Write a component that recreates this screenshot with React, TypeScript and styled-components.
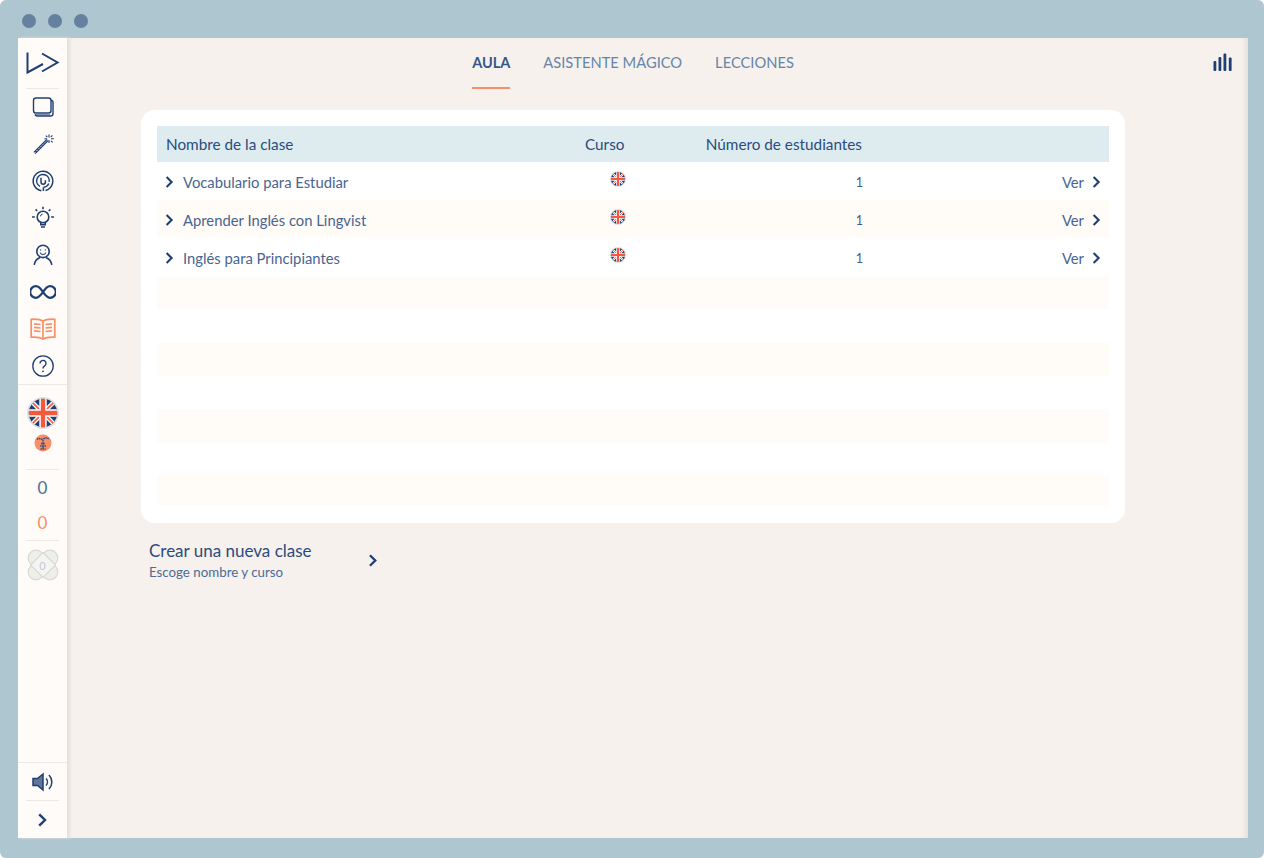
import React from "react"
import styled, { createGlobalStyle } from "styled-components"

const navy = "#1f3f73"
const ink = "#486590"
const orange = "#f98f66"

const GlobalStyle = createGlobalStyle`
  html, body {
    margin: 0;
    background: #ffffff;
    overflow: hidden;
  }
  * {
    box-sizing: border-box;
  }
`

const classes = [
  { name: "Vocabulario para Estudiar", students: 1 },
  { name: "Aprender Inglés con Lingvist", students: 1 },
  { name: "Inglés para Principiantes", students: 1 },
]

const Chevron = ({ size = 12 }: { size?: number }) => (
  <svg width={size} height={size} viewBox="0 0 12 12" fill="none">
    <path d="M3.6 1.1 8.6 6 3.6 10.9" stroke={navy} strokeWidth="2.1" />
  </svg>
)

const UkFlag = ({ size }: { size: number }) => (
  <svg width={size} height={size} viewBox="0 0 32 32">
    <defs>
      <clipPath id={`flag-${size}`}>
        <circle cx="16" cy="16" r="14.2" />
      </clipPath>
    </defs>
    <circle cx="16" cy="16" r="16" fill="#dfe0e1" />
    <g clipPath={`url(#flag-${size})`}>
      <rect width="32" height="32" fill="#1f3f73" />
      <path d="M0 0 32 32M32 0 0 32" stroke="#fff" strokeWidth="4.4" />
      <path d="M0 0 32 32M32 0 0 32" stroke="#f5593d" strokeWidth="1.6" />
      <path d="M16 0V32M0 16H32" stroke="#fff" strokeWidth="7.4" />
      <path d="M16 0V32M0 16H32" stroke="#f5593d" strokeWidth="4.4" />
    </g>
  </svg>
)

const Logo = () => (
  <svg width="34" height="24" viewBox="0 0 34 24" fill="none" stroke={navy} strokeWidth="2">
    <path d="M1.500 1.500V21.500L17 13" />
    <path d="M16 2.500 31.500 11.500 16 20.500" />
  </svg>
)

const Cards = () => (
  <svg width="24" height="24" viewBox="0 0 24 24" fill="none" stroke={navy}>
    <rect x="2.500" y="3" width="17.500" height="15" rx="2.500" strokeWidth="1.400" />
    <path d="M20 5.500h.4a1.600 1.600 0 0 1 1.600 1.600v11.300a2.600 2.600 0 0 1-2.600 2.600H6.600A2.600 2.600 0 0 1 4 19.600" strokeWidth="1.400" />
    <path d="M3.400 18.600a2.500 2.500 0 0 0 2.400 1.200h13.400" strokeWidth="0.800" />
  </svg>
)

const Wand = () => (
  <svg width="24" height="24" viewBox="0 0 24 24" fill="none" stroke={navy}>
    <path d="M3.500 21 16.500 8" strokeWidth="3" />
    <path d="M3.500 21 16.500 8" stroke="#fefbf8" strokeWidth="1" strokeDasharray="1.500 1.200" />
    <path d="M18 2.500v3M18 8v3M13.500 6.800h2.600M20 6.800h2.800M14.800 3.600l1.600 1.600M20 8.800l1.600 1.600M21.400 3.400l-1.600 1.600" strokeWidth="1.100" />
  </svg>
)

const Maze = () => (
  <svg width="24" height="24" viewBox="0 0 24 24" fill="none" stroke={navy} strokeWidth="1.500">
    <path d="M10.400 21.700A9.800 9.800 0 1 1 14.500 21.500" />
    <path d="M9 17.400A6.300 6.300 0 1 1 18.200 12.800" />
    <path d="M17.800 14.500A6.300 6.300 0 0 1 12.500 18.300" />
    <path d="M10 8.800V13a2.200 2.200 0 0 0 4.400 0v-1.800" />
    <path d="M12.400 22v-3.700" />
  </svg>
)

const Bulb = () => (
  <svg width="24" height="24" viewBox="0 0 24 24" fill="none" stroke={navy} strokeWidth="1.600">
    <circle cx="12" cy="11" r="5.800" />
    <path d="M9.800 16.500v2.300h4.400v-2.300M10 21h4" />
    <path d="M12 .8v2.400M4.600 3.400l1.600 1.600M19.400 3.400l-1.600 1.600M1 11h2.800M20.200 11h2.800" />
    <path d="M9.400 10.400a2.800 2.800 0 0 1 2.200-2.400" strokeWidth="1" />
  </svg>
)

const Learner = () => (
  <svg width="24" height="24" viewBox="0 0 24 24" fill="none" stroke={navy} strokeWidth="1.600">
    <circle cx="12" cy="8.400" r="6.200" />
    <path d="M3.200 21.800c.6-3.400 3-6 5.800-7.200M20.800 21.800c-.6-3.400-3-6-5.800-7.200" />
    <path d="M9.200 9.600a3 3 0 0 0 5.600 0" strokeWidth="1.200" />
    <path d="M9.600 6.400v1.200M14.400 6.400v1.200" strokeWidth="1.300" />
  </svg>
)

const Infinity_ = () => (
  <svg width="26" height="24" viewBox="0 0 26 24" fill="none" stroke={navy} strokeWidth="2.200">
    <path d="M13 12c-2-3-3.800-5.800-7-5.800a5.800 5.800 0 0 0 0 11.600c3.200 0 5-2.800 7-5.800s3.800-5.800 7-5.800a5.800 5.800 0 0 1 0 11.600c-3.200 0-5-2.800-7-5.800Z" />
  </svg>
)

const Book = () => (
  <svg width="26" height="24" viewBox="0 0 26 24" fill="none" stroke={orange} strokeWidth="1.700">
    <path d="M13 4C10.500 2.500 5 2 1.200 2.300V20.200C5 19.900 10.500 20.400 13 22 15.500 20.400 21 19.900 24.800 20.200V2.300C21 2 15.500 2.500 13 4Z" />
    <path d="M13 4V22M15.500 7.500 22 6.800M15.500 11 22 10.300M15.500 14.500 22 13.800M4 6.800 10.500 7.500M4 10.300 10.500 11M4 13.800 10.500 14.500" />
  </svg>
)

const Help = () => (
  <svg width="24" height="24" viewBox="0 0 24 24" fill="none" stroke={navy} strokeWidth="1.300">
    <circle cx="12" cy="12" r="10.200" />
    <path d="M9 9.400a3 3 0 1 1 4.600 2.500c-1 .7-1.600 1.300-1.600 2.700" strokeWidth="1.400" />
    <circle cx="12" cy="17.300" r="0.900" fill={navy} stroke="none" />
  </svg>
)

const Speaker = () => (
  <svg width="24" height="24" viewBox="0 0 24 24" fill="none" stroke={navy}>
    <path d="M2 8.500H6.500L12 4V20L6.500 15.500H2Z" fill="#5f7697" strokeWidth="1.500" />
    <path d="M15 8.500a5 5 0 0 1 0 7M18 5a10 10 0 0 1 0 14" strokeWidth="1.500" />
  </svg>
)

const Bars = () => (
  <svg width="20" height="20" viewBox="0 0 20 20" fill={navy}>
    <rect x="0.500" y="8" width="2.800" height="10" rx="1" />
    <rect x="5.500" y="4" width="2.800" height="14" rx="1" />
    <rect x="10.500" y="0.500" width="2.800" height="17.500" rx="1" />
    <rect x="15.800" y="4.500" width="2.800" height="13.500" rx="1" />
  </svg>
)

const Badge = () => (
  <svg width="18" height="18" viewBox="0 0 18 18">
    <circle cx="9" cy="9" r="8.500" fill={orange} />
    <path d="M3 5.500C5 3 7 6 9 5s4-2 6 .5M9 6v9M6 12h6M6.500 15h5M7 9.500h4" fill="none" stroke="#2f5288" strokeWidth="1.500" strokeDasharray="1.600 .6" />
  </svg>
)

const Clover = () => (
  <svg width="32" height="32" viewBox="0 0 32 32" fill="none" stroke="#d9d9d6" strokeWidth="1.200">
    <circle cx="9" cy="9" r="7.800" fill="#eeeeeb" />
    <circle cx="23" cy="9" r="7.800" fill="#eeeeeb" />
    <circle cx="9" cy="23" r="7.800" fill="#eeeeeb" />
    <circle cx="23" cy="23" r="7.800" fill="#eeeeeb" />
    <path d="M16 3.500 28.500 16 16 28.500 3.500 16Z" fill="#f6f4f1" />
  </svg>
)

const navIcons = [
  <Cards key="cards" />,
  <Wand key="wand" />,
  <Maze key="maze" />,
  <Bulb key="bulb" />,
  <Learner key="learner" />,
  <Infinity_ key="infinity" />,
  <Book key="book" />,
  <Help key="help" />,
]

export default function App() {
  return (
    <Frame>
      <GlobalStyle />
      <TitleBar>
        <Dot />
        <Dot />
        <Dot />
      </TitleBar>
      <Window>
        <Sidebar>
          <LogoSlot>
            <Logo />
          </LogoSlot>
          <Divider />
          <NavList>
            {navIcons.map((icon) => (
              <NavSlot key={icon.key}>{icon}</NavSlot>
            ))}
          </NavList>
          <Divider $full />
          <FlagSlot>
            <UkFlag size={32} />
            <Badge />
          </FlagSlot>
          <Divider />
          <Count>0</Count>
          <Count $accent>0</Count>
          <Divider />
          <CloverSlot>
            <Clover />
            <CloverCount>0</CloverCount>
          </CloverSlot>
          <SidebarFoot>
            <Divider $full />
            <FootSlot>
              <Speaker />
            </FootSlot>
            <Divider />
            <FootSlot $nudge>
              <Chevron size={14} />
            </FootSlot>
          </SidebarFoot>
        </Sidebar>
        <Main>
          <Tabs>
            <Tab $active>AULA</Tab>
            <Tab>ASISTENTE MÁGICO</Tab>
            <Tab>LECCIONES</Tab>
          </Tabs>
          <StatsButton>
            <Bars />
          </StatsButton>
          <Card>
            <HeadRow>
              <span>Nombre de la clase</span>
              <span>Curso</span>
              <HeadRight>Número de estudiantes</HeadRight>
              <span />
            </HeadRow>
            <Rows>
              {classes.map((item) => (
                <Row key={item.name}>
                  <NameCell>
                    <Chevron />
                    {item.name}
                  </NameCell>
                  <FlagCell>
                    <UkFlag size={16} />
                  </FlagCell>
                  <CountCell>{item.students}</CountCell>
                  <ViewCell>
                    Ver
                    <Chevron />
                  </ViewCell>
                </Row>
              ))}
              {Array.from({ length: 7 }, (_, i) => (
                <BlankRow key={i} />
              ))}
            </Rows>
          </Card>
          <CreateClass>
            <CreateText>
              <CreateTitle>Crear una nueva clase</CreateTitle>
              <CreateSub>Escoge nombre y curso</CreateSub>
            </CreateText>
            <Chevron size={13} />
          </CreateClass>
        </Main>
      </Window>
    </Frame>
  )
}

const Frame = styled.div`
  width: 1264px;
  height: 858px;
  display: flex;
  flex-direction: column;
  padding: 0 16px 20px 18px;
  background: #aec6d0;
  border-radius: 6px;
  font-family: "Lato", "Noto Sans", sans-serif;
  color: ${ink};
`

const TitleBar = styled.div`
  height: 38px;
  flex: none;
  display: flex;
  align-items: center;
  gap: 12px;
  padding: 4px 0 0 4px;
`

const Dot = styled.span`
  width: 14px;
  height: 14px;
  border-radius: 50%;
  background: #66809f;
`

const Window = styled.div`
  flex: 1;
  display: flex;
  min-height: 0;
  background: #f6f1ed;
  box-shadow: inset -5px 0 4px -2px #e6e0db;
`

const Sidebar = styled.nav`
  width: 49px;
  flex: none;
  display: flex;
  flex-direction: column;
  align-items: center;
  background: #fefbf8;
  box-shadow: 1px 0 0 #e6e1dd, 3px 0 3px #e4dfda;
  position: relative;
`

const LogoSlot = styled.div`
  height: 50px;
  width: 100%;
  flex: none;
  display: flex;
  align-items: center;
  justify-content: center;
`

const Divider = styled.div<{ $full?: boolean }>`
  width: ${(p) => (p.$full ? "100%" : "33px")};
  height: 1px;
  flex: none;
  background: #ece8e4;
`

const NavList = styled.div`
  display: flex;
  flex-direction: column;
  flex: none;
  margin-top: -1px;
`

const NavSlot = styled.div`
  height: 37px;
  width: 49px;
  display: flex;
  align-items: center;
  justify-content: center;
`

const FlagSlot = styled.div`
  height: 84px;
  flex: none;
  display: flex;
  flex-direction: column;
  align-items: center;
  gap: 5px;
  padding-top: 12px;
`

const Count = styled.div<{ $accent?: boolean }>`
  height: 35px;
  flex: none;
  display: flex;
  align-items: center;
  font-size: 17px;
  color: ${(p) => (p.$accent ? orange : "#4f6e9a")};
`

const CloverSlot = styled.div`
  position: relative;
  margin-top: 8px;
  width: 32px;
  height: 32px;
  flex: none;
`

const CloverCount = styled.span`
  position: absolute;
  inset: 0;
  display: flex;
  align-items: center;
  justify-content: center;
  font-size: 11px;
  color: #bccbd8;
`

const SidebarFoot = styled.div`
  margin-top: auto;
  width: 100%;
  display: flex;
  flex-direction: column;
  align-items: center;
`

const FootSlot = styled.div<{ $nudge?: boolean }>`
  height: 37px;
  flex: none;
  display: flex;
  align-items: center;
  justify-content: center;
  padding-right: ${(p) => (p.$nudge ? "2px" : "0")};
`

const Main = styled.main`
  flex: 1;
  min-width: 0;
  position: relative;
  display: flex;
  flex-direction: column;
  align-items: center;
  padding-right: 49px;
`

const Tabs = styled.div`
  height: 51px;
  flex: none;
  display: flex;
  gap: 33px;
  margin-bottom: 21px;
`

const Tab = styled.div<{ $active?: boolean }>`
  display: flex;
  align-items: center;
  padding-bottom: 1px;
  height: 100%;
  font-size: ${(p) => (p.$active ? "14.5px" : "14.7px")};
  font-weight: ${(p) => (p.$active ? 700 : 400)};
  color: ${(p) => (p.$active ? "#37588a" : "#6685a8")};
  border-bottom: 2px solid ${(p) => (p.$active ? orange : "transparent")};
`

const StatsButton = styled.div`
  position: absolute;
  top: 15px;
  right: 15px;
`

const Card = styled.section`
  width: 984px;
  height: 413px;
  flex: none;
  padding: 16px;
  background: #ffffff;
  border-radius: 14px;
`

const rowGrid = `
  display: grid;
  grid-template-columns: 419px 120px 157px 1fr;
  align-items: center;
  padding: 0 7px 0 9px;
`

const HeadRow = styled.div`
  ${rowGrid}
  height: 36px;
  padding-bottom: 1px;
  background: #deecf0;
  color: #2b4b7e;
  font-size: 15.3px;
`

const HeadRight = styled.span`
  text-align: right;
`

const Rows = styled.div`
  & > :nth-child(even) {
    background: #fffbf7;
  }
`

const Row = styled.div`
  ${rowGrid}
  height: 38.2px;
  padding-top: 1px;
  font-size: 14.8px;
`

const BlankRow = styled.div`
  height: 33px;
  &:last-child {
    height: 30px;
  }
`

const NameCell = styled.div`
  display: flex;
  align-items: center;
  gap: 8px;
  margin-left: -3px;
`

const FlagCell = styled.div`
  display: flex;
  padding: 0 0 6px 25px;
`

const CountCell = styled.div`
  text-align: right;
  font-size: 12.5px;
  color: #3f5c88;
  margin-right: -1px;
  padding-top: 1px;
`

const ViewCell = styled.div`
  display: flex;
  align-items: center;
  justify-content: flex-end;
  gap: 6px;
`

const CreateClass = styled.div`
  width: 984px;
  flex: none;
  display: flex;
  align-items: center;
  gap: 52px;
  padding: 17px 0 0 8px;
`

const CreateText = styled.div`
  width: 165px;
  display: flex;
  flex-direction: column;
  gap: 3px;
`

const CreateTitle = styled.div`
  font-size: 17px;
  color: #2b4b7e;
`

const CreateSub = styled.div`
  font-size: 13.3px;
  color: #4d6a95;
`
